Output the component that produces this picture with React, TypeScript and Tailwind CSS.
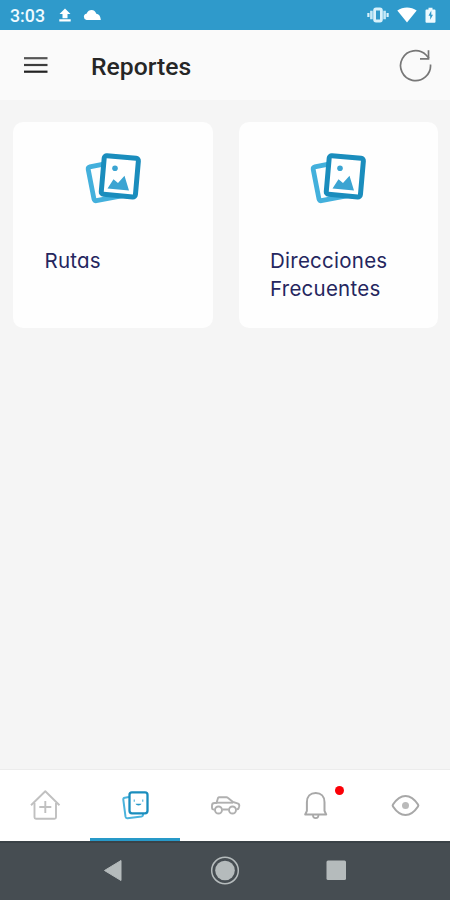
import React from "react";

type ReportCardProps = {
  title: string;
};

const UploadIcon = () => (
  <svg className="h-4 w-4" viewBox="0 0 16 16" fill="#fff">
    <path d="M8 1.500 13.500 7H10.500v4.200H5.500V7H2.500zM2.300 12.300h11.400v2.200H2.300z" />
  </svg>
);

const CloudIcon = () => (
  <svg className="h-3 w-[18px]" viewBox="0 0 18 12" fill="#fff">
    <path d="M3.500 11a3.200 3.200 0 0 1 0-6.300C4.800 2 6.500 1 8.500 1c2.500 0 4 1.500 4.800 3.700C15.700 5 17.500 6.500 17.800 11z" />
  </svg>
);

const VibrateIcon = () => (
  <svg className="h-[18px] w-[22px]" viewBox="0 0 22 18" fill="none">
    <rect x="7.600" y="3" width="6.800" height="12" rx="1.500" stroke="#d8f1fb" strokeWidth="2.800" />
    <path d="M4.400 4.800v8.400M17.600 4.800v8.400" stroke="#c4e8f7" strokeWidth="2.600" />
    <path d="M1.400 7v4M20.600 7v4" stroke="#d8f1fb" strokeWidth="2.200" />
  </svg>
);

const WifiIcon = () => (
  <svg className="h-4 w-5" viewBox="0 0 20 16" fill="#fff">
    <path d="M.3 3.400C6-.5 14-.5 19.700 3.400L10 15.500z" />
  </svg>
);

const BatteryIcon = () => (
  <svg className="h-4 w-[11px]" viewBox="0 0 11 16">
    <path d="M1.500 2.500H3.500V.8h4v1.700h2a1 1 0 0 1 1 1v11.300a1 1 0 0 1-1 1h-8a1 1 0 0 1-1-1V3.500a1 1 0 0 1 1-1z" fill="#eefaff" />
    <path d="M6.300 3.500 3.500 8.800h1.700v4L8 7.800H6.300z" fill="#2f9acb" />
  </svg>
);

const MenuIcon = () => (
  <svg className="h-[18px] w-6" viewBox="0 0 24 18" strokeWidth="2.200">
    <path d="M0 2.200h23.500" stroke="#555" />
    <path d="M0 9h23.500" stroke="#3d3d3d" />
    <path d="M0 15.700h23.500" stroke="#222" />
  </svg>
);

const RefreshIcon = () => (
  <svg className="h-[34px] w-[34px]" viewBox="0 0 34 34" fill="none" stroke="#777" strokeWidth="1.700">
    <path d="M31.500 16.500A15 15 0 1 1 27.100 7L30 10.300" />
    <path d="M29.500 2.300v8.500h-8.500" />
  </svg>
);

const PicturesIcon = () => (
  <svg className="h-[54px] w-[58px]" viewBox="84 151 58 54" fill="none">
    <rect x="90.800" y="164" width="31" height="34.500" rx="2" transform="rotate(-11 106 181.200)" stroke="#43b0dc" strokeWidth="4.800" />
    <rect x="102.700" y="157" width="34.300" height="38.700" rx="2.500" transform="rotate(5 120 176)" fill="#fff" stroke="#1a8dbd" strokeWidth="5" />
    <circle cx="115" cy="168.300" r="2.800" fill="#3ba4d2" />
    <path d="M107.500 188.500 113.500 179.300 118 183 124.500 175.700 129 190.500z" fill="#3ba4d2" />
  </svg>
);

const HomeIcon = () => (
  <svg className="h-8 w-8" viewBox="0 0 32 32" fill="none" stroke="#c0c0c0" strokeWidth="1.900" strokeLinejoin="round">
    <path d="M5.500 14v14.200a1.500 1.500 0 0 0 1.500 1.500h18.500a1.500 1.500 0 0 0 1.500-1.500V14" />
    <path d="M2 16.300 16.300 2.300 30.500 16.300" />
    <path d="M16.300 12v12M10.300 18h12" />
  </svg>
);

const CardsIcon = () => (
  <svg className="h-8 w-8" viewBox="119 789 32 32" fill="none">
    <path d="M129 797l-4.200.7a1.800 1.800 0 0 0-1.500 2l2.200 17a1.800 1.800 0 0 0 2 1.500l14-1.700a1.800 1.800 0 0 0 1.500-1.500v-2" stroke="#4bb3dc" strokeWidth="2" />
    <rect x="129.500" y="792.300" width="18" height="21" rx="2.500" fill="#fff" stroke="#1a8dbd" strokeWidth="2.300" />
    <path d="M134.300 799.500v2.200M142.700 799.500v2.200" stroke="#6fc0e2" strokeWidth="1.400" />
    <path d="M135.500 803.800h6c-1 2.300-5 2.300-6 0z" fill="#2899c8" />
  </svg>
);

const CarIcon = () => (
  <svg className="h-8 w-8" viewBox="209 789 32 32" fill="none" stroke="#b0b0b0" strokeWidth="1.900" strokeLinejoin="round">
    <path d="M214.500 809.500h-1a1.500 1.500 0 0 1-1.500-1.500v-2.500a2.500 2.500 0 0 1 2.500-2.500h2l1.500-5a1.500 1.500 0 0 1 1.300-.8h7.200a2 2 0 0 1 1.300.5l5.200 4.300 4.500 1.300a2.500 2.500 0 0 1 1.700 3l-.7 2.200a1.500 1.500 0 0 1-1.300.8h-.7M222.500 809.500h6" />
    <path d="M216 802.700h17" />
    <circle cx="218.500" cy="810" r="3.500" />
    <circle cx="232.500" cy="810" r="3.500" />
  </svg>
);

const BellIcon = () => (
  <svg className="h-8 w-8" viewBox="299 789 32 32" fill="none" stroke="#a8a8a8" strokeWidth="2" strokeLinejoin="round">
    <path d="M305.200 814.500h21l-1.700-3.700v-8.600c0-5.700-3.400-9.200-8.800-9.200s-8.800 3.500-8.800 9.200v8.600z" />
    <path d="M312.900 814.700a2.800 3.500 0 0 0 5.600 0" strokeWidth="1.700" />
  </svg>
);

const EyeIcon = () => (
  <svg className="h-8 w-8" viewBox="389 789 32 32" fill="none">
    <path d="M393 804.500c3.800-5.700 8-8.500 12.500-8.500s8.700 2.800 12.500 8.500a1.800 1.800 0 0 1 0 2c-3.800 5.700-8 8.500-12.500 8.500s-8.700-2.800-12.500-8.500a1.800 1.800 0 0 1 0-2z" stroke="#a8a8a8" strokeWidth="2.100" />
    <circle cx="405.500" cy="805.500" r="3.500" fill="#bababa" />
  </svg>
);

const ReportCard: React.FC<ReportCardProps> = ({ title }) => {
  return (
    <div className="flex h-[206px] flex-col rounded-[10px] bg-[#fefefe] pt-[29px]">
      <div className="flex justify-center">
        <PicturesIcon />
      </div>
      <p className="mt-[42px] w-[160px] pl-[31.500px] font-['Inter','Open_Sans',sans-serif] text-[20.500px] leading-7 tracking-[0.250px] text-[#25265e] [font-feature-settings:'cv11']">
        {title}
      </p>
    </div>
  );
};

const tabs = [
  { id: "home", icon: <HomeIcon /> },
  { id: "reports", icon: <CardsIcon /> },
  { id: "cars", icon: <CarIcon /> },
  { id: "alerts", icon: <BellIcon /> },
  { id: "view", icon: <EyeIcon /> },
];

const App: React.FC = () => {
  const active = "reports";

  return (
    <div className="flex h-[900px] w-[450px] flex-col overflow-hidden bg-[#f5f5f5] font-['Roboto',sans-serif]">
      <div className="flex h-[30px] items-center bg-[#2f9acb] pr-[14px] pl-[10px] text-white">
        <span className="w-[47px] pt-[3px] text-[17.800px] font-medium text-[#eefaff]">3:03</span>
        <UploadIcon />
        <div className="ml-[10px]">
          <CloudIcon />
        </div>
        <div className="ml-auto flex items-center">
          <VibrateIcon />
          <div className="mr-2 ml-2">
            <WifiIcon />
          </div>
          <BatteryIcon />
        </div>
      </div>

      <header className="flex h-[70px] items-center bg-[#fafafa] pr-[17px] pl-6">
        <MenuIcon />
        <h1 className="ml-[43px] pt-[3px] text-[24.700px] font-medium text-[#262626]">Reportes</h1>
        <button type="button" className="ml-auto">
          <RefreshIcon />
        </button>
      </header>

      <main className="grid flex-1 grid-cols-2 content-start gap-x-[26px] pt-[22px] pr-3 pl-[13px]">
        <ReportCard title="Rutas" />
        <ReportCard title="Direcciones Frecuentes" />
      </main>

      <nav className="grid h-[72px] grid-cols-5 border-t border-[#ececec] bg-white">
        {tabs.map((tab) => (
          <button
            key={tab.id}
            type="button"
            className={`relative flex justify-center border-b-[3px] pt-[19px] ${
              tab.id === active ? "border-[#2899c8]" : "border-transparent"
            }`}
          >
            {tab.icon}
            {tab.id === "alerts" && (
              <span className="absolute top-4 left-[65px] h-[9px] w-[9px] rounded-full bg-[#fb0007]" />
            )}
          </button>
        ))}
      </nav>

      <footer className="flex h-[59px] justify-center border-t-2 border-[#3a4247] bg-[#464d52] pt-3">
        <svg className="h-8 w-[250px]" viewBox="100 855 250 32" fill="#b5bbbc">
          <path d="M104.500 870.500 121 860.500v20z" strokeLinejoin="round" stroke="#b5bbbc" strokeWidth="1" />
          <circle cx="225" cy="870.500" r="9.800" />
          <circle cx="225" cy="870.500" r="13.300" fill="none" stroke="#b5bbbc" strokeWidth="1.500" />
          <rect x="326.500" y="860.500" width="19.500" height="19.500" rx="1.500" />
        </svg>
      </footer>
    </div>
  );
};

export default App;
